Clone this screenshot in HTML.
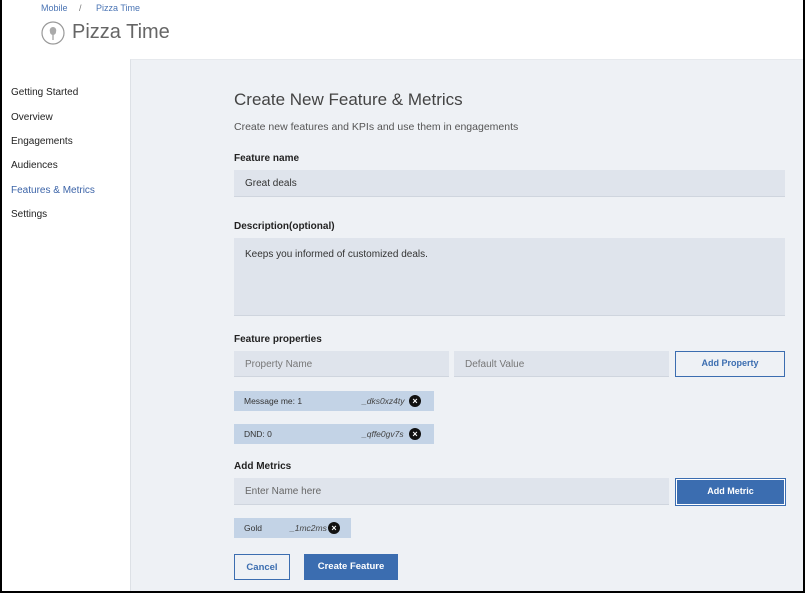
<!DOCTYPE html><html><head><style>
*{box-sizing:border-box;margin:0;padding:0}
body{width:805px;height:593px;overflow:hidden;font-family:"Liberation Sans",sans-serif;background:#fff;position:relative}
.frame{position:absolute;left:0;top:0;width:805px;height:593px;border:2px solid #000;border-top:none;pointer-events:none;z-index:10}
.a{position:absolute}
.main{position:absolute;left:130px;top:59px;width:675px;height:534px;background:#eef1f5;border-left:1px solid #dde1e6;border-top:1px solid #e6e9ed}
.nav{position:absolute;left:11px;font-size:10px;color:#222}
.lbl{position:absolute;left:234px;font-size:10px;font-weight:bold;color:#222}
.inp{position:absolute;background:#dfe4ec;font-size:10px;color:#333;padding-left:11px;border-bottom:1px solid #cfd5de}
.tag{position:absolute;left:234px;height:20px;background:#c3d3e6;font-size:8.5px;color:#333;line-height:20px;padding-left:10px}
.tag i{position:absolute;font-style:italic;color:#444}
.x{position:absolute;width:12px;height:12px;border-radius:50%;background:#111;color:#fff;font-size:9px;line-height:12px;text-align:center;font-weight:bold}
</style></head><body>
<div class="a" style="left:41px;top:3px;font-size:9px;color:#4a74b4">Mobile</div>
<div class="a" style="left:79px;top:3px;font-size:9px;color:#777">/</div>
<div class="a" style="left:96px;top:3px;font-size:9px;color:#4a74b4">Pizza Time</div>
<svg class="a" style="left:41px;top:21px" width="24" height="24"><circle cx="12" cy="12" r="11" fill="none" stroke="#999" stroke-width="1.2"/><path d="M12 19V9" stroke="#888" stroke-width="1"/><path d="M9 11c-1-3 1-5 3-5s4 2 3 5c0 2-2 3-3 3s-3-1-3-3z" fill="#aaa"/></svg>
<div class="a" style="left:72px;top:21px;font-size:20px;color:#666">Pizza Time</div>
<div class="nav" style="top:87px">Getting Started</div>
<div class="nav" style="top:112px">Overview</div>
<div class="nav" style="top:136px">Engagements</div>
<div class="nav" style="top:160px">Audiences</div>
<div class="nav" style="top:185px;color:#3c64a8">Features &amp; Metrics</div>
<div class="nav" style="top:209px">Settings</div>
<div class="main"></div>
<div class="a" style="left:234px;top:90px;font-size:17px;color:#444">Create New Feature &amp; Metrics</div>
<div class="a" style="left:234px;top:121px;font-size:10.5px;color:#555">Create new features and KPIs and use them in engagements</div>
<div class="lbl" style="top:153px">Feature name</div>
<div class="inp" style="left:234px;top:170px;width:551px;height:27px;line-height:28px">Great deals</div>
<div class="lbl" style="top:221px">Description(optional)</div>
<div class="inp" style="left:234px;top:238px;width:551px;height:78px;padding-top:11px">Keeps you informed of customized deals.</div>
<div class="lbl" style="top:334px">Feature properties</div>
<div class="inp" style="left:234px;top:351px;width:215px;height:26px;line-height:27px;color:#777">Property Name</div>
<div class="inp" style="left:454px;top:351px;width:215px;height:26px;line-height:27px;color:#777">Default Value</div>
<div class="a" style="left:675px;top:351px;width:110px;height:26px;border:1px solid #3b6db0;font-size:9px;font-weight:bold;color:#3b6db0;text-align:center;line-height:23px">Add Property</div>
<div class="tag" style="top:391px;width:200px">Message me: 1<i style="left:128px">_dks0xz4ty</i><span class="x" style="left:175px;top:4px">×</span></div>
<div class="tag" style="top:424px;width:200px">DND: 0<i style="left:128px">_qffe0gv7s</i><span class="x" style="left:175px;top:4px">×</span></div>
<div class="lbl" style="top:461px">Add Metrics</div>
<div class="inp" style="left:234px;top:478px;width:435px;height:27px;line-height:28px;color:#666">Enter Name here</div>
<div class="a" style="left:675px;top:478px;width:111px;height:28px;background:#3b6db0;border:1px solid #3b6db0;box-shadow:inset 0 0 0 1px #fff;font-size:9px;font-weight:bold;color:#fff;text-align:center;line-height:25px">Add Metric</div>
<div class="tag" style="top:518px;width:117px">Gold<i style="left:56px">_1mc2ms</i><span class="x" style="left:94px;top:4px">×</span></div>
<div class="a" style="left:234px;top:554px;width:56px;height:26px;border:1px solid #3b6db0;font-size:9.5px;font-weight:bold;color:#3b6db0;text-align:center;line-height:25px">Cancel</div>
<div class="a" style="left:304px;top:554px;width:94px;height:26px;background:#3b6db0;font-size:9.5px;font-weight:bold;color:#fff;text-align:center;line-height:26px">Create Feature</div>
<div class="frame"></div>
</body></html>
